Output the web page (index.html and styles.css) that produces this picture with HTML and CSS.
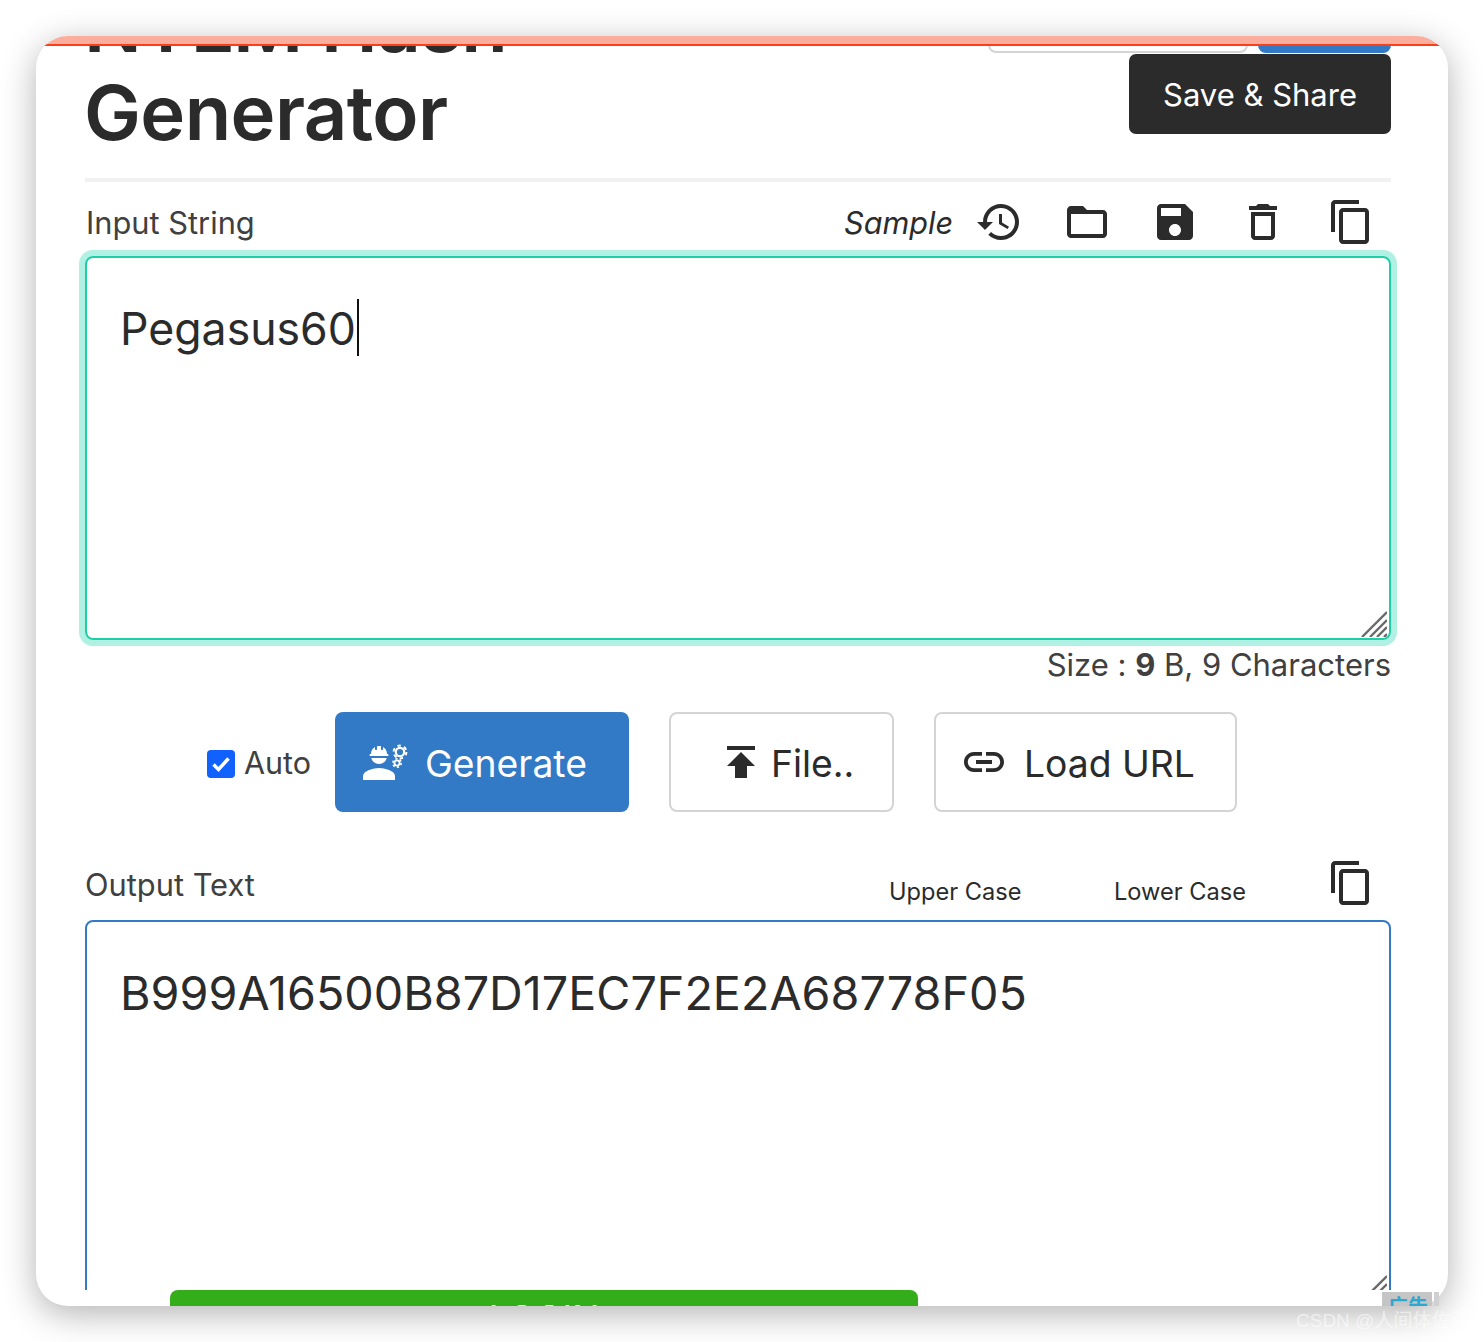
FILE: index.html
```html
<!DOCTYPE html>
<html lang="en">
  <head>
    <meta charset="UTF-8" />
    <title>NTLM Hash Generator</title>
    <link rel="stylesheet" href="styles.css">
  </head>
  <body>
    <div class="window">
      <div class="progress"></div>
      <div class="scroll">
        <div class="head">
          <h1>NTLM Hash Generator</h1>
          <div class="actions">
            <div class="action-row">
              <span class="stub stub-outline"></span>
              <span class="stub stub-blue"></span>
            </div>
            <button class="btn-dark">Save &amp; Share</button>
          </div>
        </div>
        <hr class="divider" />

        <div class="label-row">
          <span class="label">Input String</span>
          <div class="tools">
            <em class="sample">Sample</em>
            <svg class="icon" viewBox="0 0 24 24"><path d="M13 3c-4.97 0-9 4.03-9 9H1l3.89 3.89.07.14L9 12H6c0-3.87 3.13-7 7-7s7 3.13 7 7-3.13 7-7 7c-1.93 0-3.68-.79-4.94-2.06l-1.42 1.42C8.27 19.99 10.51 21 13 21c4.97 0 9-4.03 9-9s-4.03-9-9-9zm-1 5v5l4.28 2.54.72-1.21-3.5-2.08V8H12z"/></svg>
            <svg class="icon" viewBox="0 0 24 24"><path d="M20 6h-8l-2-2H4c-1.1 0-1.99.9-1.99 2L2 18c0 1.1.9 2 2 2h16c1.1 0 2-.9 2-2V8c0-1.1-.9-2-2-2zm0 12H4V8h16v10z"/></svg>
            <svg class="icon" viewBox="0 0 24 24"><path d="M17 3H5c-1.11 0-2 .9-2 2v14c0 1.1.89 2 2 2h14c1.1 0 2-.9 2-2V7l-4-4zm-5 16c-1.66 0-3-1.34-3-3s1.34-3 3-3 3 1.34 3 3-1.34 3-3 3zm3-10H5V5h10v4z"/></svg>
            <svg class="icon" viewBox="0 0 24 24"><path d="M6 19c0 1.1.9 2 2 2h8c1.1 0 2-.9 2-2V7H6v12zM8 9h8v10H8V9zm7.5-5l-1-1h-5l-1 1H5v2h14V4z"/></svg>
            <svg class="icon" viewBox="0 0 24 24"><path d="M16 1H4c-1.1 0-2 .9-2 2v14h2V3h12V1zm3 4H8c-1.1 0-2 .9-2 2v14c0 1.1.9 2 2 2h11c1.1 0 2-.9 2-2V7c0-1.1-.9-2-2-2zm0 16H8V7h11v14z"/></svg>
          </div>
        </div>
        <div class="field field-focus">
          Pegasus60<span class="caret"></span>
          <svg class="grip" viewBox="0 0 26 26"><path d="M1 26 26 1M9 26 26 9M16 26 26 16M23 26l3-3"/></svg>
        </div>
        <div class="size">Size : <b>9</b> B, 9 Characters</div>

        <div class="controls">
          <label class="auto">
            <span class="check"><svg viewBox="0 0 28 28"><path d="M6.500 14.500l5 5 10-11"/></svg></span>
            <span class="auto-text">Auto</span>
          </label>
          <button class="btn btn-blue">
            <svg class="btn-icon" viewBox="0 0 24 24">
              <path d="M9 15c-2.670 0-8 1.340-8 4v2h16v-2c0-2.660-5.330-4-8-4z"/>
              <path d="M4.740 9h8.530c.27 0 .49-.22.49-.49v-.02c0-.27-.22-.49-.49-.49H13c0-1.480-.81-2.750-2-3.450v.95c0 .28-.22.5-.5.5s-.5-.22-.5-.5V4.140C9.680 4.060 9.350 4 9 4s-.68.06-1 .14V5.500c0 .28-.22.5-.5.5S7 5.780 7 5.500v-.95C5.810 5.250 5 6.520 5 8h-.26c-.27 0-.49.22-.49.49v.03c0 .26.22.48.49.48z"/>
              <path d="M9 13c1.860 0 3.410-1.280 3.860-3H5.140c.45 1.720 2 3 3.860 3z"/>
              <circle class="gear" cx="19.500" cy="7" r="2.100"/>
              <circle class="gear-teeth" cx="19.500" cy="7" r="3.200"/>
              <circle class="gear gear-small" cx="18" cy="12.500" r="1.300"/>
              <circle class="gear-teeth gear-teeth-small" cx="18" cy="12.500" r="2.100"/>
            </svg>
            <span class="btn-text">Generate</span>
          </button>
          <button class="btn btn-file">
            <svg class="btn-icon" viewBox="0 0 24 24"><path d="M5 4v2h14V4H5zm0 10h4v6h6v-6h4l-7-7-7 7z"/></svg>
            <span class="btn-text">File..</span>
          </button>
          <button class="btn btn-url">
            <svg class="btn-icon" viewBox="0 0 24 24"><path d="M3.900 12c0-1.710 1.390-3.100 3.100-3.100h4V7H7c-2.760 0-5 2.240-5 5s2.240 5 5 5h4v-1.900H7c-1.710 0-3.100-1.390-3.100-3.100zM8 13h8v-2H8v2zm9-6h-4v1.900h4c1.710 0 3.100 1.390 3.100 3.100s-1.390 3.100-3.100 3.100h-4V17h4c2.760 0 5-2.240 5-5s-2.240-5-5-5z"/></svg>
            <span class="btn-text">Load URL</span>
          </button>
        </div>

        <div class="label-row label-row-output">
          <span class="label">Output Text</span>
          <div class="tools tools-output">
            <span class="case">Upper Case</span>
            <span class="case">Lower Case</span>
            <svg class="icon" viewBox="0 0 24 24"><path d="M16 1H4c-1.1 0-2 .9-2 2v14h2V3h12V1zm3 4H8c-1.1 0-2 .9-2 2v14c0 1.1.9 2 2 2h11c1.1 0 2-.9 2-2V7c0-1.1-.9-2-2-2zm0 16H8V7h11v14z"/></svg>
          </div>
        </div>
        <div class="field field-output">
          B999A16500B87D17EC7F2E2A68778F05
          <svg class="grip" viewBox="0 0 26 26"><path d="M1 26 26 1M9 26 26 9M16 26 26 16M23 26l3-3"/></svg>
        </div>
      </div>
      <div class="foot">
        <div class="login">LOGIN</div>
      </div>
    </div>
    <div class="ad"><span class="ad-text">广告</span></div>
    <div class="ad-close"></div>
    <div class="watermark">CSDN @人间体佐菲</div>
  </body>
</html>
```

FILE: styles.css
```css
/* screenshot page: app window with a soft shadow on white */
html,
body {
  margin: 0;
  height: 100%;
}
body {
  padding: 36px;
  box-sizing: border-box;
  background-color: #ffffff;
  color: #2b2b2b;
  font-family: "Inter", "Liberation Sans", sans-serif;
  overflow: hidden;
  position: relative;
}
.window {
  position: relative;
  height: 1270px;
  background-color: #ffffff;
  border-radius: 32px;
  box-shadow: 0 8px 34px rgba(0, 0, 0, 0.3);
  overflow: hidden;
}
.progress {
  position: absolute;
  top: 0;
  left: 0;
  right: 0;
  height: 8px;
  background-color: #fbae9d;
  border-bottom: 2px solid #f9401a;
  z-index: 2;
}
.scroll {
  height: 1254px;
  overflow: hidden;
  padding: 0 57px 0 49px;
}
.head {
  display: flex;
  justify-content: space-between;
  margin-top: -56px;
}
h1 {
  margin: 0 0 0 -1px;
  width: 500px;
  font-size: 76px;
  line-height: 88px;
  font-weight: 600;
  letter-spacing: -0.6px;
}
.actions {
  display: flex;
  flex-direction: column;
  align-items: flex-end;
  padding-top: 9px;
}
.action-row {
  display: flex;
  gap: 10px;
  height: 64px;
}
.stub {
  display: block;
  height: 64px;
  box-sizing: border-box;
  border-radius: 8px;
}
.stub-outline {
  width: 260px;
  border: 2px solid #d4d4d4;
}
.stub-blue {
  width: 133px;
  background-color: #3279c6;
}
.btn-dark {
  margin-top: 1px;
  width: 262px;
  height: 80px;
  border: 0;
  border-radius: 7px;
  background-color: #2b2b2b;
  color: #ffffff;
  font-family: inherit;
  font-size: 31px;
}
.divider {
  margin: 22px 0 0;
  height: 4px;
  border: 0;
  background-color: #f1f1f1;
}
.label-row {
  display: flex;
  justify-content: space-between;
  align-items: center;
  height: 48px;
  margin-top: 16px;
  padding-right: 16px;
}
.label-row-output {
  margin-top: 47px;
}
.label {
  padding-left: 1px;
  font-size: 30.800px;
  color: #404040;
}
.label-row-output .label {
  padding-top: 2px;
  padding-left: 0;
}
.tools {
  display: flex;
  align-items: center;
  gap: 40px;
}
.tools-output {
  gap: 0;
}
.sample {
  font-size: 30.600px;
  margin-right: -16px;
  padding-right: 0;
  transform: translateX(2px);
}
.icon {
  width: 48px;
  height: 48px;
  fill: #2b2b2b;
  display: block;
}
.case {
  font-size: 23.600px;
  width: 225px;
  padding-top: 16px;
}
.case + .case {
  width: 213px;
}
.field {
  position: relative;
  box-sizing: border-box;
  height: 384px;
  margin-top: 10px;
  padding: 39px 33px;
  border-radius: 8px;
  line-height: 64px;
  color: #2b2b2b;
}
.field-focus {
  font-size: 44.600px;
  border: 2px solid #1ccfa5;
  box-shadow: 0 0 0 6px #b1f1e4;
}
.field-output {
  font-size: 46.700px;
  margin-top: 13px;
  border: 2px solid #3279c6;
}
.caret {
  display: inline-block;
  width: 2px;
  height: 57px;
  background-color: #111111;
  vertical-align: middle;
  margin-left: 1px;
  margin-top: -11px;
}
.grip {
  position: absolute;
  right: 2px;
  bottom: 1px;
  width: 26px;
  height: 26px;
  fill: none;
  stroke: #6a6a6a;
  stroke-width: 2.400;
}
.size {
  margin-top: 7px;
  height: 36px;
  text-align: right;
  font-size: 31px;
  line-height: 36px;
  color: #404040;
}
.controls {
  display: flex;
  align-items: center;
  height: 100px;
  margin-top: 29px;
  padding-left: 122px;
}
.auto {
  display: flex;
  align-items: center;
  gap: 9px;
  width: 128px;
  padding-top: 4px;
  font-size: 30.500px;
  color: #404040;
}
.auto-text {
  margin-top: -3px;
}
.check {
  display: block;
  width: 28px;
  height: 28px;
  border-radius: 4px;
  background-color: #1061fe;
}
.check svg {
  display: block;
  fill: none;
  stroke: #ffffff;
  stroke-width: 3.500;
}
.btn {
  display: flex;
  align-items: center;
  box-sizing: border-box;
  height: 100px;
  border-radius: 8px;
  font-family: inherit;
  font-size: 37.300px;
}
.btn-text {
  padding-top: 3px;
}
.btn-icon {
  width: 48px;
  height: 48px;
  flex: none;
  fill: currentColor;
}
.btn-blue {
  width: 294px;
  margin-right: 40px;
  padding: 0 0 0 26px;
  gap: 16px;
  border: 0;
  background-color: #3279c6;
  color: #ffffff;
}
.btn-file {
  width: 225px;
  margin-right: 40px;
  padding: 0 0 0 46px;
  gap: 6px;
  border: 2px solid #d4d4d4;
  background-color: #ffffff;
  color: #2b2b2b;
}
.btn-url {
  width: 303px;
  padding: 0 0 0 24px;
  gap: 16px;
  border: 2px solid #d4d4d4;
  background-color: #ffffff;
  color: #2b2b2b;
}
.gear {
  fill: none;
  stroke: #ffffff;
  stroke-width: 1.100;
}
.gear-teeth {
  fill: none;
  stroke: #ffffff;
  stroke-width: 1;
  stroke-dasharray: 1.700 1.650;
}
.gear-small {
  stroke-width: 0.900;
}
.gear-teeth-small {
  stroke-width: 0.800;
  stroke-dasharray: 1.100 1.100;
}
.foot {
  height: 16px;
  overflow: hidden;
  padding-left: 134px;
}
.login {
  width: 748px;
  height: 60px;
  border-radius: 8px;
  background-color: #33ad19;
  color: #ffffff;
  text-align: center;
  font-size: 36px;
  line-height: 56px;
}
.ad {
  position: absolute;
  left: 1382px;
  top: 1292px;
  width: 50px;
  height: 14px;
  overflow: hidden;
  background-color: #c5c5c5;
}
.ad-text {
  display: block;
  padding-left: 6px;
  font-family: "Noto Sans CJK SC", sans-serif;
  font-size: 20px;
  font-weight: 700;
  line-height: 28px;
  color: #2ea8d0;
  white-space: nowrap;
}
.ad-close {
  position: absolute;
  left: 1434px;
  top: 1292px;
  width: 5px;
  height: 14px;
  background-color: #d0d0d0;
}
.watermark {
  position: absolute;
  left: 1296px;
  top: 1309px;
  font-family: "Liberation Sans", "Noto Sans CJK SC", sans-serif;
  font-size: 19px;
  line-height: 24px;
  white-space: nowrap;
  color: rgba(255, 255, 255, 0.55);
}
```
